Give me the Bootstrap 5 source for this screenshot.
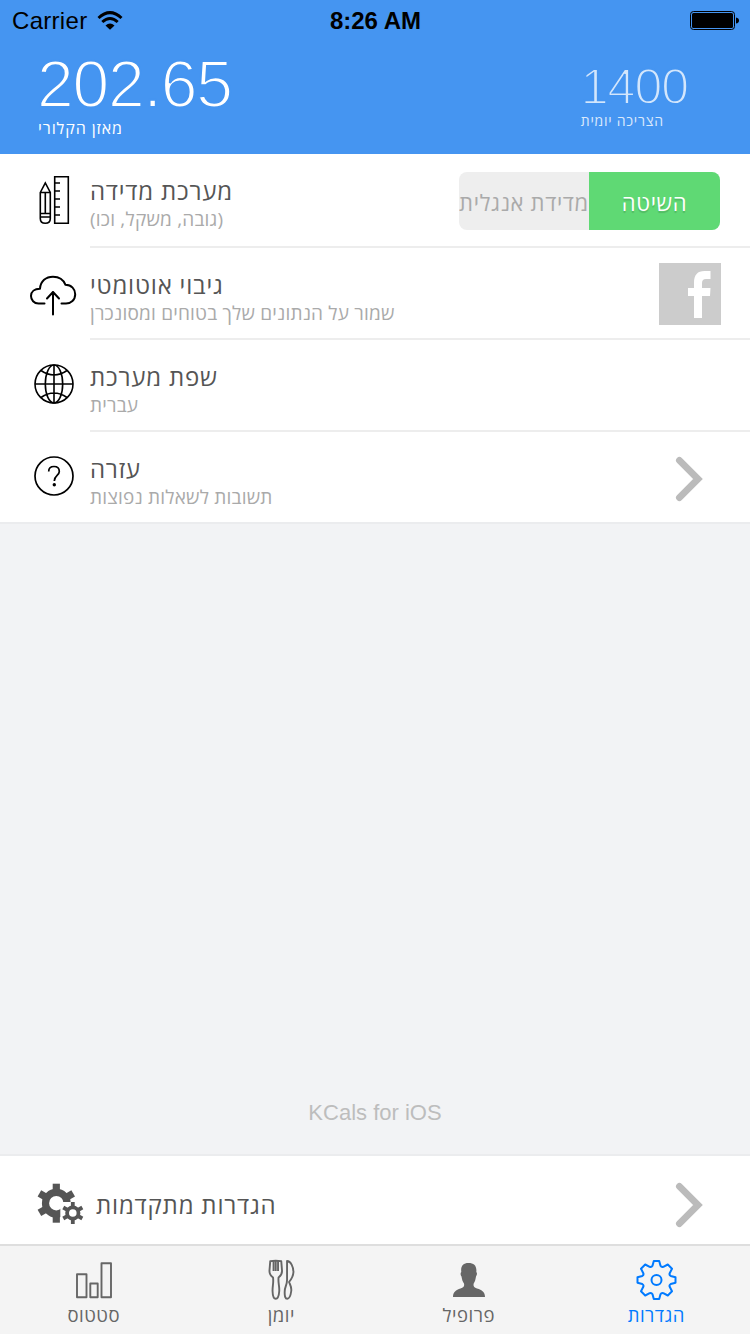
<!DOCTYPE html>
<html lang="he">
<head>
<meta charset="utf-8">
<meta name="viewport" content="width=device-width, initial-scale=1">
<title>KCals</title>
<link href="https://cdn.jsdelivr.net/npm/bootstrap@5.3.0/dist/css/bootstrap.min.css" rel="stylesheet">
<style>
body{font-family:"Open Sans","Liberation Sans",sans-serif;background:#f2f3f5;color:#555;height:1334px;overflow:hidden}
svg{display:block;flex:none}
.he{direction:rtl;unicode-bidi:isolate;white-space:nowrap;width:max-content}
.top-area{height:154px;background:#4595f1}
.status-line{height:42px;padding:0 11px 0 12px;font:24px/42px "Liberation Sans",sans-serif;color:#000}
.status-line>div{flex:1 1 0}
.carrier{letter-spacing:.3px}
.clock{font-weight:bold;text-align:center;font-size:24px}
.totals{padding:0 62px 0 38px;color:#fff}
/* a stroke in the bar colour slims the digits down to a light weight */
.kcal{font:66px/76px "Liberation Sans",sans-serif;letter-spacing:-1.2px;padding-top:4px;margin-left:-1px;-webkit-text-stroke:2px #4595f1}
.goal{font:50px/72px "Liberation Sans",sans-serif;letter-spacing:-1px;padding-top:9px;-webkit-text-stroke:1.8px #4595f1;color:#d3e6fc}
.cap1{font-size:16px;line-height:20px;letter-spacing:.9px;margin-top:-4px}
.cap2{font-size:14px;line-height:18px;letter-spacing:.75px;opacity:.8;margin-top:-11px}
.set-row{height:92px;background:#fff}
.set-row.first{height:94px}
.ico{width:90px}
.row-body{border-bottom:2px solid #ededed}
.row-text{padding-top:21px}
.last .row-body{border:0}
.last{border-bottom:2px solid #ebecee}
.ttl{font-size:24px;line-height:32px;letter-spacing:.8px}
.sub{font-size:19px;line-height:24px;letter-spacing:.2px;color:#aaa}
.seg{width:261px;height:58px;margin:18px 30px 0 0;border-radius:8px;overflow:hidden;background:#eee;font-size:22px;line-height:60px;letter-spacing:.65px;color:#aaa}
.seg div{width:130px;display:flex;justify-content:center}
.seg .on{width:131px;background:#5fd974;color:#fff;text-shadow:0 2px 1px rgba(0,0,0,.15)}
.brand{font:22px/28px "Liberation Sans",sans-serif;color:#bdbdbd;margin-bottom:27px}
.adv{height:92px;background:#fff;border-top:2px solid #ebecee;border-bottom:2px solid #dedede}
.tabs{height:88px;background:#f4f4f4;color:#666;font-size:18.500px;letter-spacing:.5px;line-height:24px}
.tabs .tab{width:187.5px;padding-top:10px}
.tabs .he{margin-top:-1px}
.tabs .active{color:#007aff}
</style>
</head>
<body class="d-flex flex-column">
<header class="top-area">
  <div class="status-line d-flex align-items-center">
    <div class="carrier d-flex align-items-center">Carrier
      <svg style="margin-left:10px" width="26" height="20" viewBox="0 0 26 20" fill="none" stroke="#000" stroke-width="3"><path d="M1.500 7Q13-3.700 24.500 7"/><path d="M5.300 11Q13 4 20.700 11"/><path d="M8.500 14.600Q13 10.600 17.500 14.600L13 18.800Z" fill="#000" stroke="none"/></svg>
    </div>
    <div class="clock">8:26 AM</div>
    <div class="d-flex justify-content-end">
      <svg width="49" height="20" viewBox="0 0 49 20"><rect x=".5" y=".5" width="44" height="18" rx="3" fill="none" stroke="#000"/><rect x="2" y="2" width="41" height="15" rx="1.500"/><path d="M46 6.500Q49 7 49 9.500T46 12.500Z"/></svg>
    </div>
  </div>
  <div class="totals d-flex justify-content-between">
    <div><div class="kcal">202.65</div><div class="cap1 he">מאזן הקלורי</div></div>
    <div><div class="goal">1400</div><div class="cap2 he">הצריכה יומית</div></div>
  </div>
</header>
<main>
  <div class="set-row first d-flex">
    <div class="ico"><svg width="90" height="92" viewBox="0 154 90 92" fill="none" stroke="#000" stroke-width="1.600"><path d="M54.700 176.700H68.300V223.300H54.700ZM54.700 183H60M54.700 191H60M54.700 199H60M54.700 207H60M54.700 215H60"/><path d="M40.300 192.500L45.300 183L50.300 192.500V218.500Q50.300 223.300 45.300 223.300T40.300 218.500ZM40.300 192.500H50.300M40.300 213.500H50.300M40.300 217H50.300M45.300 192.500V213.500"/></svg></div>
    <div class="row-body flex-grow-1 d-flex justify-content-between">
      <div class="row-text"><div class="ttl he">מערכת מדידה</div><div class="sub he">(גובה, משקל, וכו)</div></div>
      <div class="seg d-flex"><div><span class="he">מדידת אנגלית</span></div><div class="on"><span class="he">השיטה</span></div></div>
    </div>
  </div>
  <div class="set-row d-flex">
    <div class="ico"><svg width="90" height="90" viewBox="0 248 90 90" fill="none" stroke="#000" stroke-width="2" stroke-linecap="round" stroke-linejoin="round"><path d="M44.500 303.500H38.500C34 303.500 31 300 31 296C31 291.500 34.500 288.700 40 288.700C40.500 281 46 276.700 53 276.700C59 276.700 63.500 279.800 65.500 284.800C71.500 285 75.200 289 75.200 294.300C75.200 300 71 303.500 66 303.500H61.500M53 314.500V292M47 298.500L53 292L59 298.500"/></svg></div>
    <div class="row-body flex-grow-1 d-flex justify-content-between">
      <div class="row-text"><div class="ttl he">גיבוי אוטומטי</div><div class="sub he">שמור על הנתונים שלך בטוחים ומסונכרן</div></div>
      <svg style="margin:15px 29px 0 0" width="62" height="62" viewBox="0 0 62 62"><path fill="#ccc" d="M0 0H62V62H0Z"/><path fill="#fff" d="M35 55V33H29V25H35V19.500Q35 8 45.500 8H51.500V16H47Q43 16 43 20V25H51.500L51 33H43V55Z"/></svg>
    </div>
  </div>
  <div class="set-row d-flex">
    <div class="ico"><svg width="90" height="90" viewBox="0 340 90 90" fill="none" stroke="#000" stroke-width="1.600"><circle cx="54" cy="384" r="19"/><path d="M35 384H73M54 365V403M41 370.500Q54 379.500 67 370.500M41 397.500Q54 388.500 67 397.500"/><ellipse cx="54" cy="384" rx="8.700" ry="19"/></svg></div>
    <div class="row-body flex-grow-1"><div class="row-text"><div class="ttl he">שפת מערכת</div><div class="sub he">עברית</div></div></div>
  </div>
  <div class="set-row last d-flex">
    <div class="ico"><svg width="90" height="90" viewBox="0 432 90 90" fill="none" stroke="#000" stroke-width="1.700"><circle cx="54" cy="476" r="19"/><path d="M48.700 471.500Q48.700 466.500 54 466.500T59.300 471.500C59.300 475.500 54.300 475.500 54.300 481"/><circle cx="54.300" cy="484.700" r="1.700" fill="#000" stroke="none"/></svg></div>
    <div class="row-body flex-grow-1 d-flex justify-content-between">
      <div class="row-text"><div class="ttl he">עזרה</div><div class="sub he">תשובות לשאלות נפוצות</div></div>
      <svg style="margin:23px 46px 0 0" width="30" height="48" viewBox="0 0 30 48" fill="none" stroke="#bbb" stroke-width="6.800"><path d="M5.400 5.400L24 24L5.400 42.600" stroke-linecap="round"/></svg>
    </div>
  </div>
</main>
<div class="brand text-center mt-auto">KCals for iOS</div>
<section class="adv d-flex justify-content-between">
  <div class="d-flex">
    <svg width="96" height="88" viewBox="0 1156 96 88" fill="#555">
      <g transform="translate(56.300 1203.200)"><circle r="10.800" fill="none" stroke="#555" stroke-width="7.200"/><g id="t3"><path id="t1" d="M-3.600-19.500H3.600V-12H-3.600Z"/><use href="#t1" transform="rotate(60)"/><use href="#t1" transform="rotate(-60)"/></g><use href="#t3" transform="rotate(180)"/></g>
      <path fill="#fff" d="M60.300 1202H90V1230H60.300Z"/>
      <g transform="translate(72.800 1213)"><circle r="5.700" fill="none" stroke="#555" stroke-width="3.800"/><g id="s3"><path id="s1" d="M-1.900-11H1.900V-6H-1.900Z"/><use href="#s1" transform="rotate(60)"/><use href="#s1" transform="rotate(-60)"/></g><use href="#s3" transform="rotate(180)"/></g>
    </svg>
    <div class="ttl he" style="margin-top:33px">הגדרות מתקדמות</div>
  </div>
  <svg style="margin:25px 46px 0 0" width="30" height="48" viewBox="0 0 30 48" fill="none" stroke="#bbb" stroke-width="6.800"><path d="M5.400 5.400L24 24L5.400 42.600" stroke-linecap="round"/></svg>
</section>
<nav class="tabs d-flex">
  <div class="tab d-flex flex-column align-items-center"><svg width="44" height="48" viewBox="72 1256 44 48" fill="none" stroke="#666" stroke-width="1.900" stroke-linejoin="round"><path d="M77 1274.300H86.500V1297.200H77ZM90.300 1283.500H97.700V1297.200H90.300ZM101.500 1263.200H111V1297.200H101.500Z"/></svg><div class="he">סטטוס</div></div>
  <div class="tab d-flex flex-column align-items-center"><svg width="44" height="48" viewBox="259.250 1256 44 48" fill="none" stroke="#666" stroke-width="1.900" stroke-linejoin="round"><path d="M270.500 1261.200Q276 1260 281.500 1261.200L282.300 1271Q282.300 1275 278.800 1277.500C278.200 1283 279.800 1286 279.500 1291Q279 1298.800 276 1298.800T272.800 1291C272.700 1286 274 1283 273.300 1277.500Q269.700 1275 269.700 1271ZM273.800 1261V1271M276 1261V1271M278.300 1261V1271"/><path d="M287.300 1261C291 1261 293.700 1267 293.700 1272Q293.500 1277 289.300 1282C290.500 1285 292 1287 291.500 1291Q290.500 1298.800 287.500 1298.800T285 1291C285 1287 287.300 1285 287.300 1280Z"/></svg><div class="he">יומן</div></div>
  <div class="tab d-flex flex-column align-items-center"><svg width="44" height="48" viewBox="447 1256 44 48" fill="#666"><path d="M453 1297C453 1292 456 1290 460.500 1288.500C464 1287.300 464.500 1286 464 1283.500C462.500 1281.500 462 1279.500 461.500 1276.500C460.300 1275 460.300 1273 461.300 1272C460.500 1266 463 1263 468.500 1263S477 1266 476.300 1272C477.300 1273 477.200 1275 476 1276.500C475.500 1279.500 475 1281.500 473.700 1283.500C473.200 1286 473.500 1287.300 477 1288.500C482 1290 485 1292 485 1297Z"/></svg><div class="he">פרופיל</div></div>
  <div class="tab active d-flex flex-column align-items-center"><svg width="44" height="48" viewBox="-22.500 -24 44 48" fill="none" stroke="#007aff" stroke-width="2" stroke-linejoin="round"><path d="M-2.700-19H2.700L4-14.200Q5-12.500 6.800-13.200L11.300-15.500L15.500-11.300L13.200-6.800Q12.500-5 14.200-4L19-2.700V2.700L14.200 4Q12.500 5 13.200 6.800L15.500 11.300L11.300 15.500L6.800 13.200Q5 12.500 4 14.200L2.700 19H-2.700L-4 14.200Q-5 12.500-6.800 13.200L-11.300 15.500L-15.500 11.300L-13.200 6.800Q-12.500 5-14.200 4L-19 2.700V-2.700L-14.200-4Q-12.500-5-13.200-6.800L-15.500-11.300L-11.300-15.500L-6.800-13.200Q-5-12.500-4-14.200Z"/><circle r="5"/></svg><div class="he">הגדרות</div></div>
</nav>
<script src="https://cdn.jsdelivr.net/npm/bootstrap@5.3.0/dist/js/bootstrap.bundle.min.js"></script>
</body>
</html>
